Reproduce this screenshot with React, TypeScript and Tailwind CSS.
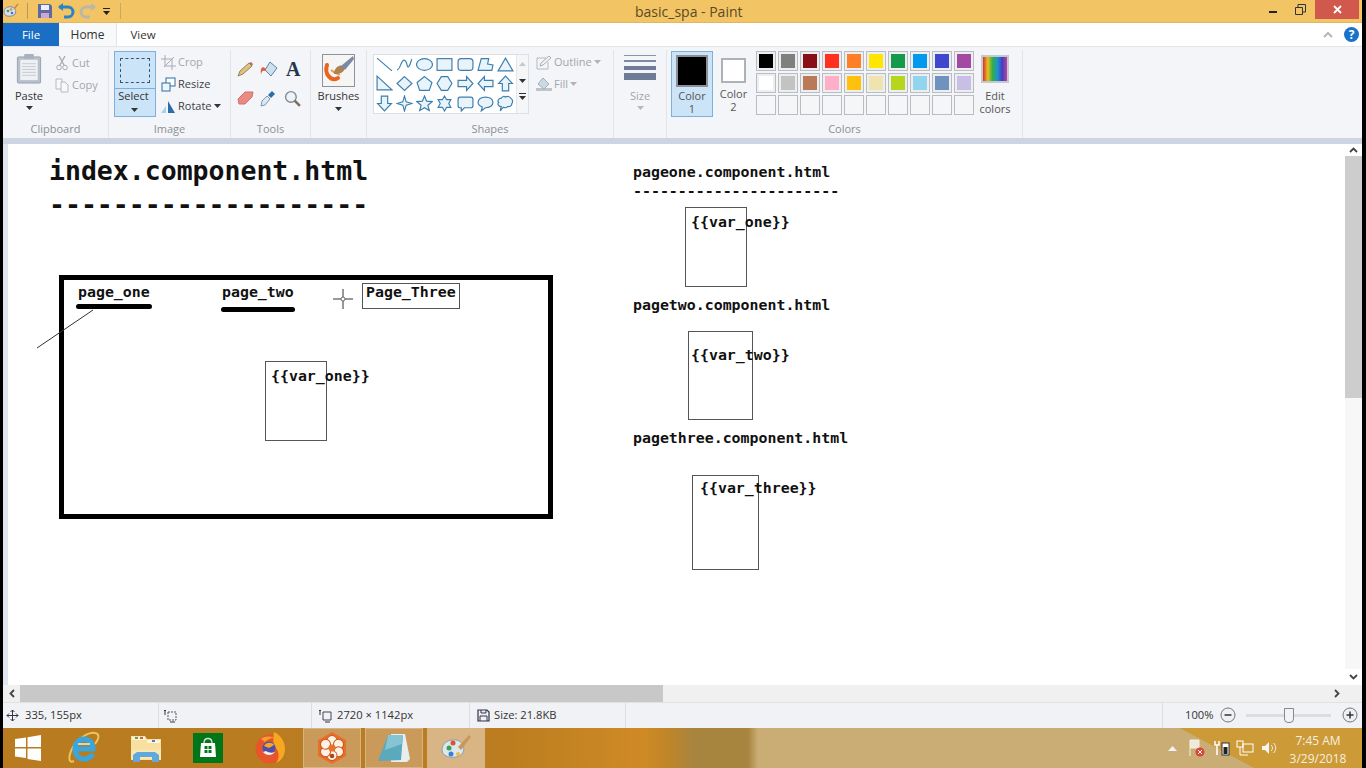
import React from "react";

const UI = "font-['Open_Sans','Noto_Sans',sans-serif]";
const MONO = "font-['DejaVu_Sans_Mono','Liberation_Mono',monospace] font-bold text-[#111]";

const Caret = ({ c = "#333" }: { c?: string }) => (
  <svg width="7" height="4" viewBox="0 0 7 4" className="block"><path d="M0 0h7L3.5 4z" fill={c} /></svg>
);

const Group = ({ w, label, children, pad = "" }: { w: string; label: string; children?: React.ReactNode; pad?: string }) => (
  <div className={`${w} h-full flex flex-col border-r border-[#e2e4e8] shrink-0`}>
    <div className={`flex-1 min-h-0 flex ${pad}`}>{children}</div>
    <div className="h-[17px] text-center text-[11px] leading-[16px] text-[#8b9096]">{label}</div>
  </div>
);

const Small = ({ icon, text, caret, dim }: { icon: React.ReactNode; text: string; caret?: boolean; dim?: boolean }) => (
  <div className={`h-[22px] flex items-center gap-[2px] text-[11px] ${dim ? "text-[#a2a6ab]" : "text-[#3c3f44]"}`}>
    <span className="w-[16px] h-[16px] flex items-center justify-center">{icon}</span>
    <span>{text}</span>
    {caret && <Caret c={dim ? "#b0b3b8" : "#333"} />}
  </div>
);

const shapes: React.ReactNode[] = [
  <path d="M1 2L15 14" fill="none" />,
  <path d="M1 13C4 13 5 3 8 4S10 12 12 10S14 4 15 3" fill="none" />,
  <ellipse cx="8" cy="8" rx="7.5" ry="5.5" />,
  <rect x="1" y="2.5" width="14" height="11" />,
  <rect x="1" y="2.5" width="14" height="11" rx="3" />,
  <path d="M4 2.5h7l-1 5 5 1-1 5H1z" />,
  <path d="M8 2L15 14H1z" />,
  <path d="M1 1L15 14H1z" />,
  <path d="M8 1.5L15 8 8 14.5 1 8z" />,
  <path d="M8 1.5l7 5.5-2.5 7.5h-9L1 7z" />,
  <path d="M5 1.5h6L15 8l-4 6.5H5L1 8z" />,
  <path d="M1 5h8V1.5L15 8l-6 6.5V11H1z" />,
  <path d="M15 5H7V1.5L1 8l6 6.5V11h8z" />,
  <path d="M5 15V8H1.5L8 1l6.5 7H11v7z" />,
  <path d="M5 1v7H1.5L8 15l6.5-7H11V1z" />,
  <path d="M8 1l1.6 5.4L15 8l-5.4 1.6L8 15l-1.6-5.4L1 8l5.4-1.6z" />,
  <path d="M8 1l2 4.8 5.2.4-4 3.4 1.3 5.1L8 12l-4.5 2.7 1.3-5.1-4-3.4 5.2-.4z" />,
  <path d="M8 1l2 3.4h4l-2 3.6 2 3.6h-4L8 15l-2-3.4H2L4 8 2 4.4h4z" />,
  <path d="M3 2h10a2 2 0 012 2v6a2 2 0 01-2 2H7l-3 3v-3H3a2 2 0 01-2-2V4a2 2 0 012-2z" />,
  <path d="M8 2c4 0 7 2 7 5s-3 5-7 5l-4 3 1-3.6C3 10.500 1 9 1 7c0-3 3-5 7-5z" />,
  <path d="M4 3c1-2 3-2 4-1 1-1 4-1 5 1 2 1 2 4 1 5 0 2-2 3-4 3-1 1-3 1-4 .5L3 15l1-4C2 11 0 9 1.500 7 0 5 2 3 4 3z" />,
];

const row1 = ["#000000", "#7f7f7f", "#880f15", "#ff3020", "#ff7f27", "#ffe600", "#149a4a", "#0099ee", "#3f48cc", "#a349a4"];
const row2 = ["#ffffff", "#c3c3c3", "#b97a57", "#ffaec9", "#ffc10e", "#efe4b0", "#b5d61d", "#92d3ee", "#7092be", "#c8bfe7"];
const row3 = Array(10).fill("#f5f6f8");

const Swatch = ({ c, empty }: { c: string; empty?: boolean }) => (
  <div className={`w-[20px] h-[20px] border border-[#b9bcc0] ${empty ? "" : "p-[2px] bg-[#eceef0]"}`}>
    <div className="w-full h-full" style={{ background: c }} />
  </div>
);

const TaskBtn = ({ children, active }: { children: React.ReactNode; active?: boolean }) => (
  <div className={`w-[58px] h-[40px] flex items-center justify-center border border-[#d6b486] ${active ? "bg-[#d9b484]" : "bg-[#c99a5a]"}`}>{children}</div>
);

const Plain = ({ w, children }: { w: string; children: React.ReactNode }) => (
  <div className={`${w} h-[40px] flex items-center justify-center`}>{children}</div>
);

const SB = ({ w, children }: { w: string; children?: React.ReactNode }) => (
  <div className={`${w} h-full flex items-center border-r border-[#dcdee2] shrink-0`}>{children}</div>
);

const Txt = ({ x, y, s, children }: { x: number; y: number; s: string; children: string }) => (
  <div className={`absolute ${MONO} ${s} whitespace-pre leading-none`} style={{ left: x, top: y - 144 }}>{children}</div>
);

const Box = ({ x, y, w, h }: { x: number; y: number; w: number; h: number }) => (
  <div className="absolute border border-[#555]" style={{ left: x - 3, top: y - 144, width: w, height: h }} />
);

export default function App() {
  return (
    <div className={`w-[1366px] h-[768px] bg-black pl-[3px] pr-[4px] overflow-hidden ${UI}`}>
      <div className="w-full h-full flex flex-col">
        {/* Title bar */}
        <div className="h-[23px] bg-[#f2c464] border-b border-[#dfb865] flex items-center relative shrink-0">
          <svg width="16" height="16" viewBox="0 0 16 16">
            <path d="M1 9c0-4 4-6 8-5s5 6 2 8-10 2-10-3z" fill="#d8dfe6" stroke="#7d8a96" />
            <circle cx="5" cy="8" r="1.300" fill="#3aa05a" /><circle cx="8" cy="6.500" r="1.300" fill="#d84" /><circle cx="9" cy="10" r="1.300" fill="#47c" />
            <path d="M11 6l4-5" stroke="#c84" strokeWidth="1.500" />
          </svg>
          <div className="w-px h-[16px] bg-[#b59a60] ml-[8px]" />
          <svg width="16" height="16" viewBox="0 0 16 16" className="ml-[9px]">
            <path d="M1 1h12l2 2v12H1z" fill="#5f6a9e" /><rect x="4" y="2" width="8" height="5" fill="#eef" /><rect x="4" y="10" width="8" height="5" fill="#c9a8d8" />
          </svg>
          <svg width="17" height="16" viewBox="0 0 17 16" className="ml-[5px]">
            <path d="M1 4h9a4.500 4.500 0 010 10H6" fill="none" stroke="#2b83c6" strokeWidth="3" /><path d="M5 0v8L0 4z" fill="#2b83c6" />
          </svg>
          <svg width="17" height="16" viewBox="0 0 17 16" className="ml-[4px]">
            <path d="M16 4H7a4.500 4.500 0 000 10h4" fill="none" stroke="#b8b8a8" strokeWidth="3" /><path d="M12 0v8l5-4z" fill="#b8b8a8" />
          </svg>
          <div className="ml-[7px] flex flex-col gap-[2px]">
            <div className="w-[7px] h-px bg-[#222]" /><Caret c="#222" />
          </div>
          <div className="w-px h-[16px] bg-[#c9a85f] ml-[10px]" />
          <div className="absolute left-[632px] top-[2px] text-[14px] leading-[20px] text-[#5b4a26]">basic_spa - Paint</div>
          <div className="ml-auto flex items-center h-full">
            <div className="w-[8px] h-[2px] bg-[#222] mt-[2px]" />
            <svg width="11" height="11" viewBox="0 0 11 11" className="ml-[18px] mb-[4px]"><path d="M.5 3.500h7v7h-7zM3 3V.5h7.500V8H8" fill="none" stroke="#333" /></svg>
            <div className="ml-[9px] mr-[3px] w-[44px] h-[19px] mb-[4px] bg-[#d0584d] flex items-center justify-center">
              <svg width="9" height="9" viewBox="0 0 9 9"><path d="M1 1l7 7M8 1L1 8" stroke="#fff" strokeWidth="1.800" /></svg>
            </div>
          </div>
        </div>

        {/* Tabs */}
        <div className="h-[23px] bg-white flex items-stretch shrink-0 relative">
          <div className="w-[56px] bg-[#1a6fc4] text-white text-[11.5px] flex items-center justify-center">File</div>
          <div className="w-[58px] bg-[#f8f9fa] border-r border-[#e2e4e8] text-[#333] text-[12px] flex items-center justify-center">Home</div>
          <div className="w-[52px] text-[#333] text-[11.5px] flex items-center justify-center">View</div>
          <div className="ml-auto flex items-center pr-[3px]">
            <svg width="10" height="6" viewBox="0 0 10 6"><path d="M1 5l4-4 4 4" fill="none" stroke="#b5b5b5" strokeWidth="2" /></svg>
            <div className="ml-[11px] w-[15px] h-[15px] rounded-full bg-[#1a73c9] text-white text-[12px] font-bold leading-[15px] text-center">?</div>
          </div>
        </div>

        {/* Ribbon */}
        <div className="h-[92px] bg-[#f3f5f8] border-t border-[#e3e5e8] flex shrink-0 pt-[3px]">
          <Group w="w-[106px]" label="Clipboard">
            <div className="w-[50px] ml-[1px] flex flex-col items-center pt-[4px]">
              <svg width="26" height="30" viewBox="0 0 26 31">
                <rect x="1" y="3" width="24" height="27" rx="1" fill="#b8c0cc" stroke="#9aa3b0" />
                <rect x="4" y="6" width="18" height="21" fill="#eef0f3" />
                <path d="M6 10h14M6 13h14M6 16h14M6 19h14M6 22h14" stroke="#c5cbd3" />
                <rect x="8" y="0" width="10" height="5" rx="1" fill="#a9b1bd" />
              </svg>
              <span className="text-[11px] text-[#333] mt-[5px] leading-[13px]">Paste</span>
              <span className="mt-[4px]"><Caret /></span>
            </div>
            <div className="flex flex-col pt-[2px] gap-0">
              <Small dim text="Cut" icon={<svg width="12" height="16" viewBox="0 0 12 16"><path d="M3 1l5 9M9 1L4 10" stroke="#a8adb3" strokeWidth="1.400" /><circle cx="3" cy="12.500" r="2.300" fill="none" stroke="#a8adb3" /><circle cx="9" cy="12.500" r="2.300" fill="none" stroke="#a8adb3" /></svg>} />
              <Small dim text="Copy" icon={<svg width="15" height="15" viewBox="0 0 15 15"><path d="M1 1h6v10H1z" fill="#f7f8f9" stroke="#b5bac0" /><path d="M6 4h4l3 3v7H6z" fill="#f7f8f9" stroke="#b5bac0" /></svg>} />
            </div>
          </Group>
          <Group w="w-[122px]" label="Image" pad="pl-[5px]">
            <div className="w-[42px] h-[66px] mt-[1px] bg-[#cce4f7] border border-[#7fb0da] flex flex-col items-center">
              <div className="w-full h-[37px] border-b border-[#7fb0da] flex items-center justify-center">
                <div className="w-[30px] h-[25px] border border-dashed border-[#33557a]" />
              </div>
              <span className="text-[11px] text-[#333] leading-[13px] pr-[3px]">Select</span>
              <span className="mt-[6px] pr-[2px]"><Caret /></span>
            </div>
            <div className="flex flex-col pl-[4px] pt-[1px]">
              <Small dim text="Crop" icon={<svg width="15" height="15" viewBox="0 0 15 15"><path d="M4 0v11h11M0 4h11v11M3 12L13 2" fill="none" stroke="#a8adb3" /></svg>} />
              <Small text="Resize" icon={<svg width="15" height="15" viewBox="0 0 15 15"><rect x="5" y="1" width="9" height="8" fill="#fff" stroke="#2b6ea8" /><rect x="1" y="6" width="8" height="8" fill="#eef6fc" stroke="#2b6ea8" /></svg>} />
              <Small text="Rotate" caret icon={<svg width="16" height="15" viewBox="0 0 16 15"><path d="M8 14V2l7 12z" fill="#2b6ea8" /><path d="M1 14l5-7v7z" fill="#a8d0e8" /></svg>} />
            </div>
          </Group>
          <Group w="w-[80px]" label="Tools">
            <div className="w-[66px] ml-[6px] grid grid-cols-3 gap-x-[4px] content-start pt-[11px] gap-y-[12px]">
              <svg width="17" height="16" viewBox="0 0 17 16"><path d="M1 15l2-5 9-8 3 3-9 8z" fill="#e2c27a" stroke="#8f8360" /><path d="M12 2l3 3 1-2-2-2z" fill="#b9705a" /></svg>
              <svg width="18" height="16" viewBox="0 0 18 16"><path d="M10 1l7 6-6 8-6-6z" fill="#cfdfec" stroke="#5b84a8" /><path d="M6 8C2 4 0 8 1 13c1-3 2-4 4-3z" fill="#e2603a" /></svg>
              <span className="font-['Liberation_Serif',serif] font-bold text-[20px] leading-[17px] text-[#24364d] text-center">A</span>
              <svg width="17" height="15" viewBox="0 0 17 15"><path d="M1 9l7-7 8 0-1 5-7 7-6 0z" fill="#ea8a83" stroke="#cf7169" /></svg>
              <svg width="16" height="17" viewBox="0 0 16 17"><path d="M1 16l1-5 5-5 3 3-5 6z" fill="#dbe8f2" stroke="#7a9ab6" /><path d="M8 5l3-3 1-1 3 3-4 4z" fill="#2b6ea8" /></svg>
              <svg width="17" height="17" viewBox="0 0 16 16"><circle cx="6.500" cy="6.500" r="5" fill="#eef3f7" stroke="#7c8a96" strokeWidth="1.300" /><path d="M10 10l5 5" stroke="#7c7060" strokeWidth="2.400" /></svg>
            </div>
          </Group>
          <Group w="w-[56px]" label="">
            <div className="w-full flex flex-col items-center pt-[4px]">
              <svg width="33" height="33" viewBox="0 0 33 33">
                <rect x=".5" y=".5" width="32" height="32" fill="#f5f5f3" stroke="#8f9296" />
                <path d="M5 11C2 20 9 28 16 24" fill="none" stroke="#e8641f" strokeWidth="4" strokeLinecap="round" />
                <path d="M9 16c3 3 6 3 9 5" fill="none" stroke="#f09a50" strokeWidth="2" />
                <path d="M12 20c0-6 5-10 9-8 3 2 1 9-9 8z" fill="#ad8150" />
                <path d="M19 12L31 2l1 3-9 11z" fill="#7a8aa6" />
              </svg>
              <span className="text-[11px] text-[#333] leading-[13px] mt-[2px]">Brushes</span>
              <span className="mt-[5px]"><Caret /></span>
            </div>
          </Group>
          <Group w="w-[247px]" label="Shapes" pad="pl-[6px] pt-[4px]">
            <div className="w-[156px] h-[60px] border border-[#dcdfe3] flex">
              <div className="w-[142px] bg-white grid grid-cols-7">
                {shapes.map((s, i) => (
                  <div key={i} className="flex items-center justify-center">
                    <svg width="17" height="17" viewBox="0 0 16 16" fill="#e9f3fa" stroke="#3d7eae" strokeWidth="1.100">{s}</svg>
                  </div>
                ))}
              </div>
              <div className="flex-1 border-l border-[#e4e6e9] flex flex-col items-center pt-[7px] gap-[13px] bg-[#f5f6f8]">
                <svg width="7" height="4" viewBox="0 0 7 4"><path d="M0 4h7L3.500 0z" fill="#c5c8cc" /></svg>
                <Caret />
                <div className="flex flex-col gap-[2px] -mt-[3px]"><div className="w-[7px] h-px bg-[#333]" /><Caret /></div>
              </div>
            </div>
            <div className="flex flex-col pl-[7px] -mt-[3px]">
              <Small dim caret text="Outline" icon={<svg width="16" height="15" viewBox="0 0 16 15"><path d="M1 3h9M1 3v11h11V7" fill="none" stroke="#b4bac0" /><path d="M4 11l1-3 8-7 2 2-8 7z" fill="#f2f3f4" stroke="#a8adb3" /></svg>} />
              <Small dim caret text="Fill" icon={<svg width="16" height="15" viewBox="0 0 16 15"><path d="M0 14h16v-3H0z" fill="#bcc4cc" /><path d="M7 1l6 6-5 5-6-5z" fill="#cdd8e2" stroke="#a0adba" /></svg>} />
            </div>
          </Group>
          <Group w="w-[53px]" label="">
            <div className="w-full flex flex-col items-center pt-[5px]">
              <div className="w-[32px] flex flex-col gap-[4px]">
                <div className="h-px bg-[#8a95ab]" /><div className="h-[2px] bg-[#7e8aa3]" /><div className="h-[4px] bg-[#6f7c98]" /><div className="h-[7px] bg-[#6f7c98] -mt-px" />
              </div>
              <span className="text-[11px] text-[#a2a6ab] leading-[13px] mt-[9px]">Size</span>
              <span className="mt-[4px]"><Caret c="#b5b8bc" /></span>
            </div>
          </Group>
          <Group w="w-[356px]" label="Colors" pad="pl-[4px]">
            <div className="w-[42px] h-[66px] mt-[1px] bg-[#cce4f7] border border-[#7fb0da] flex flex-col items-center pt-[3px]">
              <div className="w-[32px] h-[32px] bg-black border-2 border-[#8d9196]" />
              <span className="text-[11px] text-[#555] leading-[13px] mt-[2px]">Color</span>
              <span className="text-[11px] text-[#555] leading-[13px]">1</span>
            </div>
            <div className="w-[41px] flex flex-col items-center pt-[8px]">
              <div className="w-[25px] h-[25px] bg-white border-2 border-[#aeb1b5]" />
              <span className="text-[11px] text-[#555] leading-[13px] mt-[4px]">Color</span>
              <span className="text-[11px] text-[#555] leading-[13px]">2</span>
            </div>
            <div className="ml-[2px] grid grid-cols-10 gap-[2px] content-start pt-[1px]">
              {row1.map((c) => <Swatch key={c} c={c} />)}
              {row2.map((c) => <Swatch key={c} c={c} />)}
              {row3.map((c, i) => <Swatch key={i} c={c} empty />)}
            </div>
            <div className="w-[42px] flex flex-col items-center pt-[5px]">
              <div className="w-[28px] h-[28px] border-2 border-[#c5c8cc] bg-[linear-gradient(90deg,#d63030,#e8c020,#30b040,#2090d0,#4040c0,#c040a0)]" />
              <span className="text-[11px] text-[#555] leading-[13px] mt-[6px]">Edit</span>
              <span className="text-[11px] text-[#555] leading-[13px]">colors</span>
            </div>
          </Group>
        </div>

        <div className="h-[6px] bg-[#cdd5e3] shrink-0" />

        {/* Canvas + scrollbar */}
        <div className="flex-1 min-h-0 flex">
          <div className="flex-1 flex flex-col min-w-0">
            <div className="flex-1 bg-white relative overflow-hidden">
              <div className="absolute left-0 top-0 bottom-0 w-[5px] bg-[#dfe6f0]" />
              <Txt x={46} y={158} s="text-[26.5px]">index.component.html</Txt>
              <Txt x={46} y={192} s="text-[26.5px]">--------------------</Txt>
              <div className="absolute left-[56px] top-[131px] w-[494px] h-[244px] border-[5px] border-black" />
              <Txt x={75} y={285} s="text-[14.900px]">page_one</Txt>
              <Txt x={219} y={285} s="text-[14.900px]">page_two</Txt>
              <div className="absolute left-[73px] top-[160px] w-[76px] h-[5px] bg-black rounded-full" />
              <div className="absolute left-[218px] top-[163px] w-[74px] h-[5px] bg-black rounded-full" />
              <Box x={362} y={283} w={98} h={26} />
              <Txt x={363} y={285} s="text-[14.900px]">Page_Three</Txt>
              <svg className="absolute left-[28px] top-[160px]" width="70" height="50" viewBox="0 0 70 50"><path d="M62 6L6 44" stroke="#333" fill="none" /></svg>
              <svg className="absolute left-[330px] top-[145px]" width="20" height="20" viewBox="0 0 20 20"><path d="M10 0v8M10 12v8M0 10h8M12 10h8" stroke="#333" fill="none" /><circle cx="10" cy="10" r="2" fill="none" stroke="#666" /></svg>
              <Box x={265} y={361} w={62} h={80} />
              <Txt x={268} y={369} s="text-[14.900px]">{"{{var_one}}"}</Txt>
              <Txt x={630} y={165} s="text-[14.900px]">pageone.component.html</Txt>
              <Txt x={630} y={184} s="text-[14.900px]">-----------------------</Txt>
              <Box x={685} y={207} w={62} h={80} />
              <Txt x={688} y={215} s="text-[14.900px]">{"{{var_one}}"}</Txt>
              <Txt x={630} y={298} s="text-[14.900px]">pagetwo.component.html</Txt>
              <Box x={688} y={331} w={65} h={89} />
              <Txt x={688} y={348} s="text-[14.900px]">{"{{var_two}}"}</Txt>
              <Txt x={630} y={431} s="text-[14.900px]">pagethree.component.html</Txt>
              <Box x={692} y={475} w={67} h={95} />
              <Txt x={697} y={481} s="text-[14.900px]">{"{{var_three}}"}</Txt>
            </div>
            {/* Horizontal scrollbar */}
            <div className="h-[17px] bg-[#f0f0f0] flex items-center shrink-0">
              <div className="w-[17px] flex justify-center shrink-0"><svg width="6" height="9" viewBox="0 0 6 9"><path d="M5 1L1.500 4.500 5 8" fill="none" stroke="#444" strokeWidth="1.800" /></svg></div>
              <div className="w-[643px] h-full bg-[#c8c8c8] shrink-0" />
              <div className="ml-auto w-[17px] flex justify-center shrink-0"><svg width="6" height="9" viewBox="0 0 6 9"><path d="M1 1l3.500 3.500L1 8" fill="none" stroke="#444" strokeWidth="1.800" /></svg></div>
            </div>
          </div>
          <div className="w-[17px] bg-white flex flex-col shrink-0">
            <div className="h-[12px] flex items-center justify-center"><svg width="9" height="6" viewBox="0 0 9 6"><path d="M1 5l3.500-3.500L8 5" fill="none" stroke="#444" strokeWidth="1.800" /></svg></div>
            <div className="h-[242px] bg-[#cdcdcd]" />
            <div className="flex-1 bg-[#f7f7f7]" />
            <div className="h-[16px] flex items-center justify-center bg-white"><svg width="9" height="6" viewBox="0 0 9 6"><path d="M1 1l3.500 3.500L8 1" fill="none" stroke="#444" strokeWidth="1.800" /></svg></div>
            <div className="h-[17px] bg-[#f0f0f0]" />
          </div>
        </div>

        {/* Status bar */}
        <div className="h-[26px] bg-[#f0f2f5] border-t border-[#dfe1e4] flex items-center text-[11.200px] text-[#333] shrink-0">
          <SB w="w-[156px]">
            <svg width="13" height="13" viewBox="0 0 13 13" className="ml-[3px]"><path d="M6.500 1v11M1 6.500h11M6.500 1l-2 2M6.500 1l2 2M6.500 12l-2-2M6.500 12l2-2M1 6.500l2-2M1 6.500l2 2M12 6.500l-2-2M12 6.500l-2 2" stroke="#334" fill="none" /></svg>
            <span className="ml-[6px]">335, 155px</span>
          </SB>
          <SB w="w-[153px]">
            <svg width="14" height="14" viewBox="0 0 14 14" className="ml-[4px]"><path d="M5 3h8v8H5z" fill="none" stroke="#556" strokeDasharray="2 1" /><path d="M2 1v5M1 2l1-1 1 1M7 13h5" stroke="#334" fill="none" /></svg>
          </SB>
          <SB w="w-[158px]">
            <svg width="14" height="14" viewBox="0 0 14 14" className="ml-[6px]"><path d="M5 3h8v8H5z" fill="none" stroke="#445" /><path d="M2 1v5M1 2l1-1 1 1M7 13h5" stroke="#334" fill="none" /></svg>
            <span className="ml-[5px]">2720 × 1142px</span>
          </SB>
          <SB w="w-[156px]">
            <svg width="13" height="13" viewBox="0 0 13 13" className="ml-[7px]"><path d="M1 1h9l2 2v9H1z" fill="none" stroke="#334" strokeWidth="1.200" /><path d="M4 1v3h5V1M3 12V7h7v5" fill="none" stroke="#334" /></svg>
            <span className="ml-[4px]">Size: 21.8KB</span>
          </SB>
          <SB w="w-[537px]" />
          <div className="flex-1 flex items-center">
            <span className="ml-[22px]">100%</span>
            <svg width="16" height="16" viewBox="0 0 16 16" className="ml-[7px]"><circle cx="8" cy="8" r="7" fill="#eef0f2" stroke="#777" /><path d="M4.500 8h7" stroke="#333" strokeWidth="1.500" /></svg>
            <div className="relative ml-[10px] w-[85px] h-[3px] bg-[#dcdde0] flex items-center justify-center">
              <div className="w-[10px] h-[15px] bg-[#f2f3f5] border border-[#888] rounded-b-[4px]" />
            </div>
            <svg width="16" height="16" viewBox="0 0 16 16" className="ml-[11px]"><circle cx="8" cy="8" r="7" fill="#eef0f2" stroke="#777" /><path d="M4.500 8h7M8 4.500v7" stroke="#333" strokeWidth="1.500" /></svg>
          </div>
        </div>

        {/* Taskbar */}
        <div className="h-[40px] flex items-center shrink-0 text-white bg-[linear-gradient(90deg,#b97b20_0,#bb7d20_500px,#cf8a25_640px,#c08528_665px,#a8853f_690px,#a8853f_745px,#c9ad74_755px,#c9ad74_100%)]">
          <Plain w="w-[50px]">
            <svg width="26" height="26" viewBox="0 0 26 26"><path d="M0 4l11-1.500V12H0zM12.500 2.300L26 0v12H12.500zM0 13.500h11V23L0 21.500zM12.500 13.500H26V26l-13.500-2z" fill="#fff" /></svg>
          </Plain>
          <Plain w="w-[62px]">
            <svg width="32" height="34" viewBox="0 0 32 34">
              <path d="M6 30C0 33 0 25 5 16S21 1 27 2s3 7 0 11" fill="none" stroke="#eac65a" strokeWidth="2" />
              <path d="M8 18h17c0-6-4-10-9-10S7 12 7 18s4 10 9 10c4 0 7-2 9-5" fill="none" stroke="#3aa6dc" strokeWidth="5" />
              <path d="M10 13h12" stroke="#aee0f6" strokeWidth="2" />
            </svg>
          </Plain>
          <Plain w="w-[62px]">
            <svg width="32" height="30" viewBox="0 0 32 30">
              <path d="M1 3h14l2 3h14v21H1z" fill="#f7e0a0" />
              <path d="M2 4h13v3H2zM17 7h13v3H17z" fill="#fdf4d8" />
              <rect x="5" y="4" width="3" height="2" fill="#5aa35a" /><rect x="10" y="4" width="3" height="2" fill="#d0604a" /><rect x="22" y="7" width="3" height="2" fill="#4a80c8" />
              <path d="M1 17h30v9H1z" fill="#f7e8b8" />
              <path d="M3 29v-7l4-3h18l4 3v7h-7v-5H10v5z" fill="#62a8dc" />
            </svg>
          </Plain>
          <Plain w="w-[62px]">
            <svg width="30" height="30" viewBox="0 0 30 30">
              <rect width="30" height="30" fill="#00761a" />
              <path d="M8 10h14l1 14H7z" fill="#fff" /><path d="M11 10c0-6 8-6 8 0" fill="none" stroke="#cfe8d2" strokeWidth="1.300" />
              <path d="M11.500 13h3v3h-3zM15.500 13h3v3h-3zM11.500 17h3v3h-3zM15.500 17h3v3h-3z" fill="#00761a" />
            </svg>
          </Plain>
          <Plain w="w-[62px]">
            <svg width="32" height="34" viewBox="0 0 32 34">
              <circle cx="16" cy="18" r="14.500" fill="#e8552a" />
              <path d="M20 1c7 3 11 10 11 17 0 7-4 12-9 14 4-5 3-11 0-15-3-3-3-9-2-16z" fill="#f6a820" />
              <path d="M7 8c4-3 9-3 13-1-4 0-7 2-9 4z" fill="#f4a030" />
              <circle cx="15" cy="17" r="6.500" fill="#4a4fb0" />
              <path d="M10 15c2-4 8-4 10-1l-5 3z" fill="#f6a820" />
              <path d="M9 21c3 4 9 4 12 0-3 1-6 1-9-1z" fill="#f4f0e8" />
            </svg>
          </Plain>
          <div className="flex gap-[4px] ml-[2px]">
            <TaskBtn>
              <svg width="32" height="32" viewBox="0 0 32 32">
                <path d="M16 1l13 7.500v15L16 31 3 23.500v-15z" fill="#e8702a" stroke="#e8702a" strokeWidth="2" strokeLinejoin="round" />
                {[0, 60, 120, 180, 240, 300].map((a) => (
                  <circle key={a} cx="16" cy="8.500" r="5" fill="#fff2e2" stroke="#c8501c" strokeWidth="1" transform={`rotate(${a} 16 16)`} />
                ))}
                <circle cx="16" cy="16" r="3.500" fill="#e8702a" />
                <circle cx="16" cy="24" r="2.300" fill="#a8481c" />
              </svg>
            </TaskBtn>
            <TaskBtn>
              <svg width="34" height="32" viewBox="0 0 34 32">
                <path d="M14 2h14l5 25-3 3H14z" fill="#e8eef0" />
                <path d="M11 3h15l-2 25-23 1z" fill="#5aa9bc" />
                <path d="M11 3h15l-1 9-17 6z" fill="#86c4d4" />
              </svg>
            </TaskBtn>
            <TaskBtn active>
              <svg width="32" height="30" viewBox="0 0 32 30">
                <path d="M2 17c0-7 7-11 14-10s10 9 6 14-20 5-20-4z" fill="#dfe7ee" stroke="#8b9fb0" />
                <circle cx="9" cy="15" r="2.500" fill="#3aa05a" /><circle cx="13" cy="10" r="2.500" fill="#d8552c" /><circle cx="11" cy="21" r="2.500" fill="#3f7fd0" /><circle cx="18" cy="21" r="2" fill="#e8c040" />
                <path d="M18 14L29 2l2 2-10 13z" fill="#c89858" />
              </svg>
            </TaskBtn>
          </div>
          <div className="ml-auto relative w-[230px] h-full flex items-center justify-end">
            <svg className="absolute left-0 top-0" width="230" height="40" viewBox="0 0 230 40"><polygon points="48,0 230,0 230,40 122,40" fill="#cc9a36" /></svg>
            <div className="relative flex items-center h-full">
              <svg width="9" height="5" viewBox="0 0 9 5"><path d="M0 5h9L4.500 0z" fill="#f2f2f2" /></svg>
              <svg width="16" height="18" viewBox="0 0 16 18" className="ml-[12px]"><path d="M1 1v16M1 1h9v8H1" fill="#f0e8d8" stroke="#f4f0e8" /><circle cx="11" cy="13" r="4.500" fill="#d8453a" /><path d="M9 11l4 4M13 11l-4 4" stroke="#fff" /></svg>
              <svg width="16" height="16" viewBox="0 0 16 16" className="ml-[9px]"><rect x="8" y="3" width="7" height="12" fill="#fff" stroke="#333" /><rect x="9.500" y="7" width="4" height="7" fill="#222" /><path d="M1 1v4h4V1M3 5v10" stroke="#fff" strokeWidth="1.500" fill="none" /></svg>
              <svg width="18" height="16" viewBox="0 0 18 16" className="ml-[6px]"><rect x="7" y="4" width="10" height="8" fill="none" stroke="#fff" /><rect x="1" y="1" width="6" height="6" fill="none" stroke="#fff" /><path d="M4 7v8h8" stroke="#fff" fill="none" /></svg>
              <svg width="16" height="14" viewBox="0 0 16 14" className="ml-[7px]"><path d="M1 5h3l4-4v12L4 9H1z" fill="#f4f4f4" /><path d="M10 4c2 2 2 4 0 6M12.500 2c3 3 3 7 0 10" stroke="#f4f4f4" fill="none" /></svg>
              <div className="ml-[11px] w-[60px] h-full text-center text-[12px] leading-[18px] text-[#f6f0e0] mr-[14px]">
                <div className="pt-[4px]">7:45 AM</div>
                <div>3/29/2018</div>
              </div>
            </div>
          </div>
        </div>
      </div>
    </div>
  );
}
